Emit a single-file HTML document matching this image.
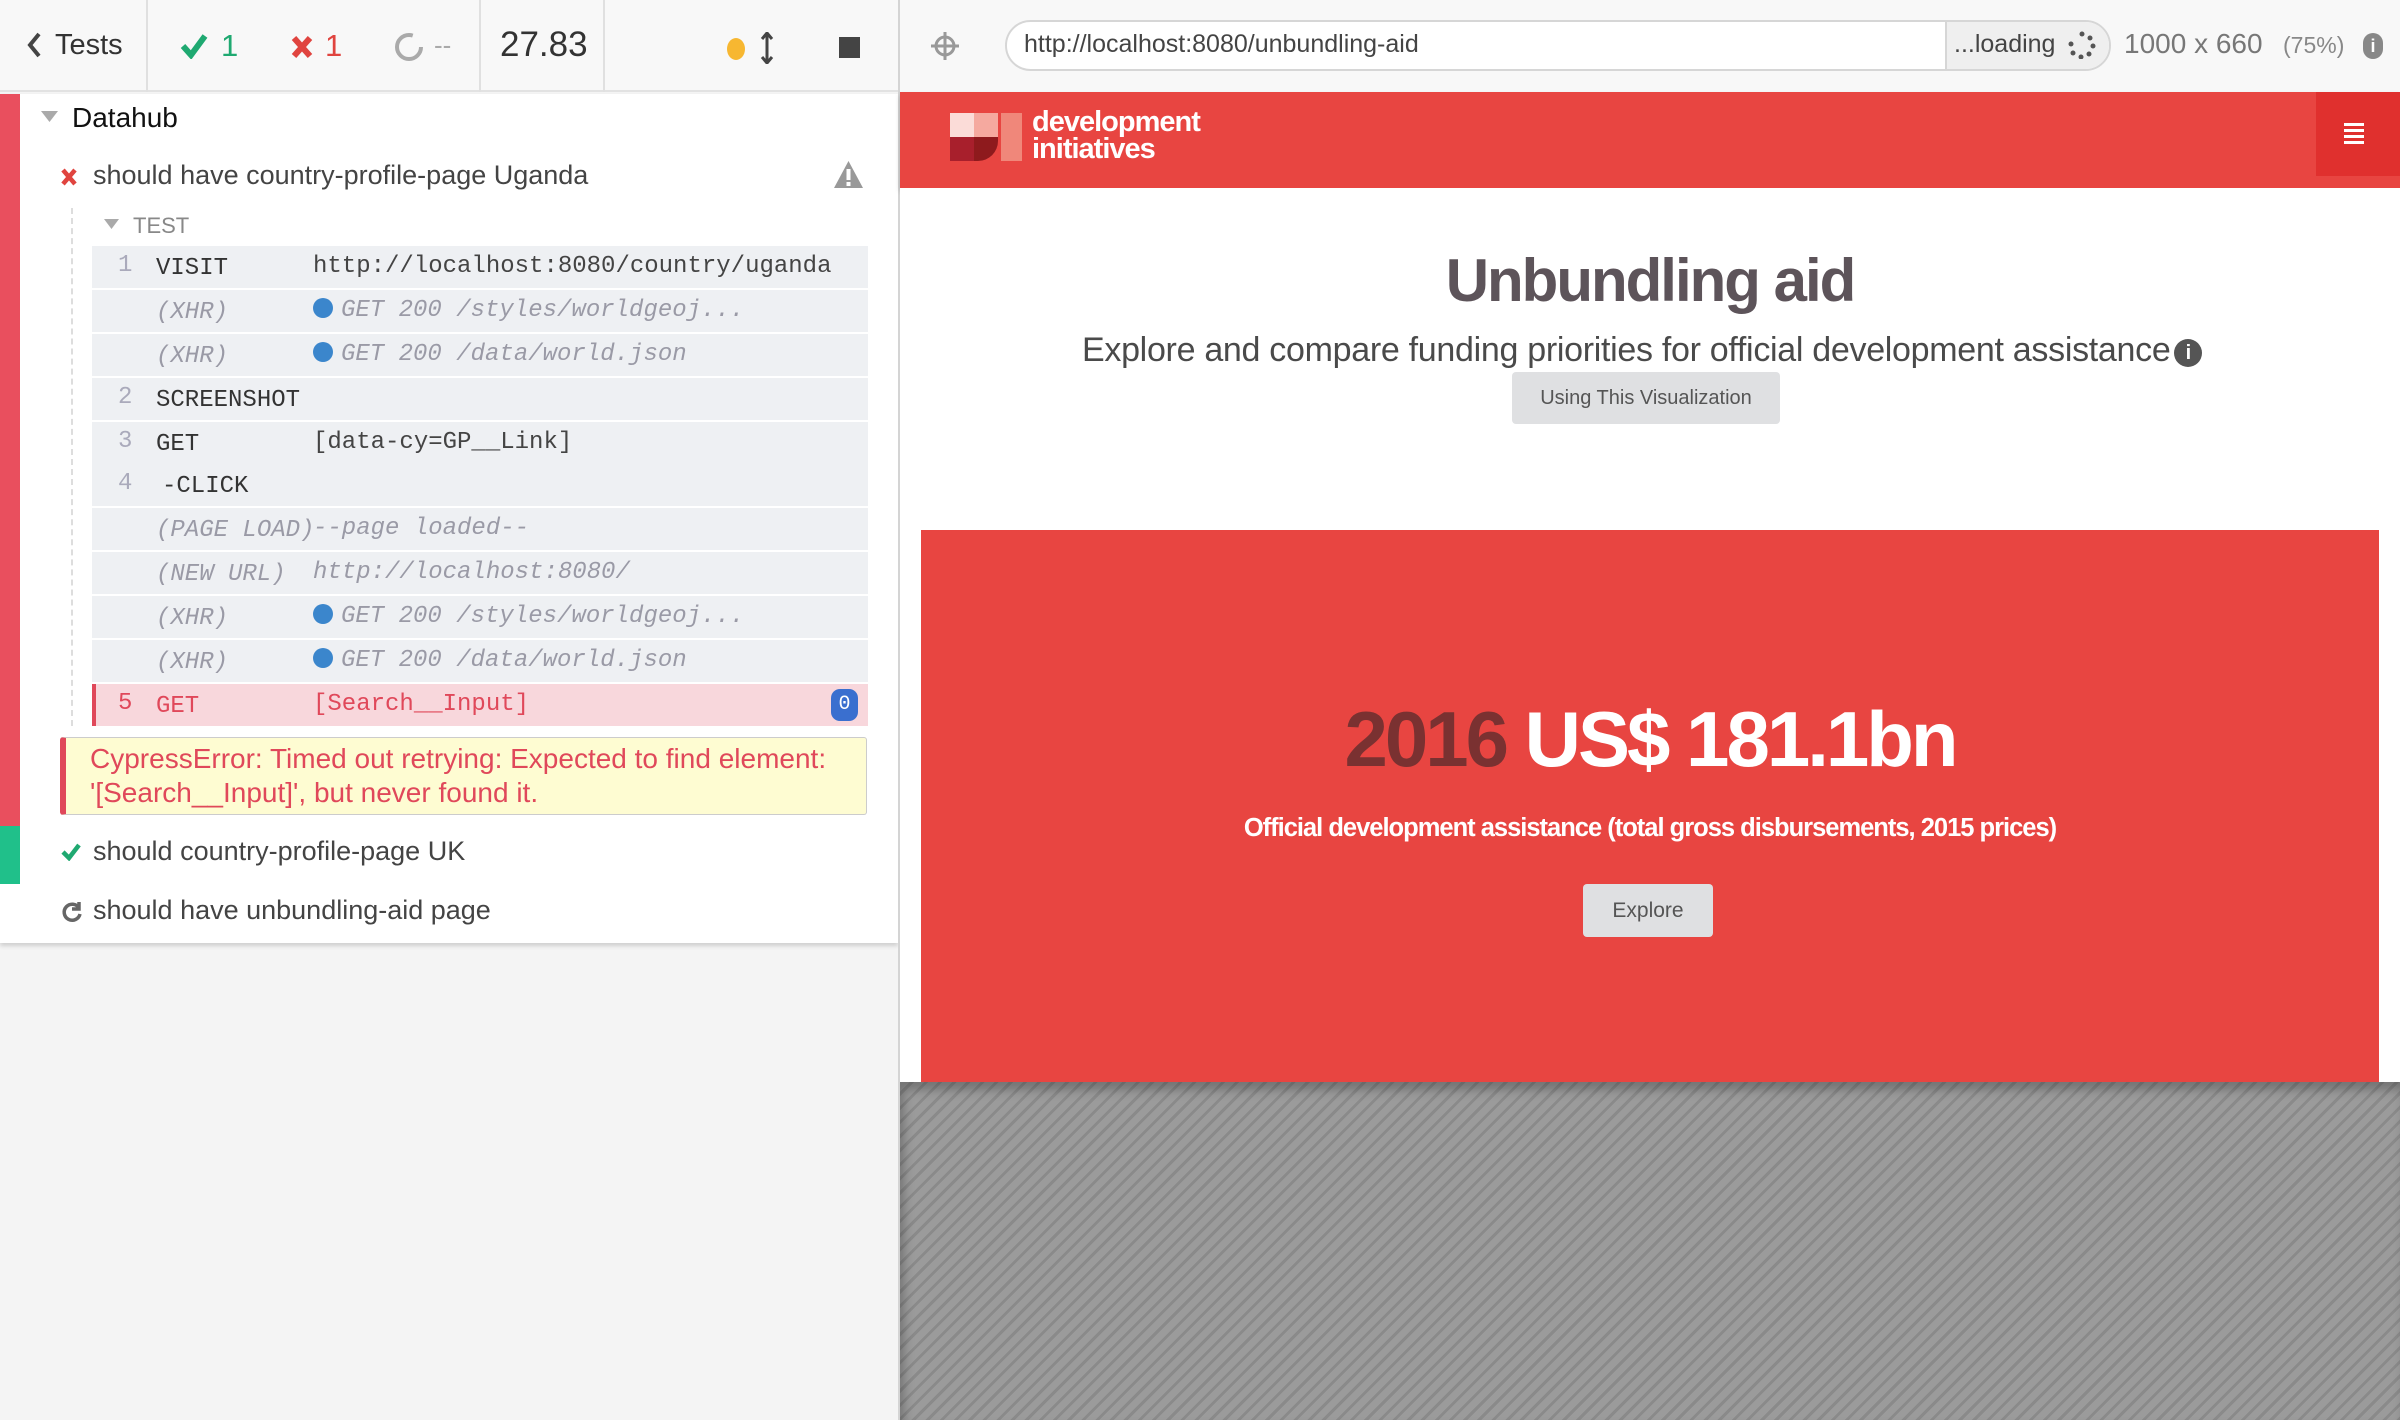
<!DOCTYPE html>
<html><head><meta charset="utf-8"><style>
*{margin:0;padding:0;box-sizing:border-box}
body{width:2400px;height:1420px;overflow:hidden;background:#f4f4f4;font-family:"Liberation Sans",sans-serif;position:relative}
.a{position:absolute;white-space:nowrap}
.mono{font-family:"Liberation Mono",monospace;font-size:24px}
.row{position:absolute;left:92px;width:776px;height:42px;background:#eef0f3}
.row .n{position:absolute;left:26px;top:6px;color:#aab;font-size:24px}
.row .c{position:absolute;left:64px;top:9px;color:#333}
.row .m{position:absolute;left:221px;top:7px;color:#444}
.row .i{font-style:italic;color:#9a9aa6}
.dot{display:inline-block;width:20px;height:20px;border-radius:50%;background:#3b86cc;vertical-align:-2px;margin-right:8px}
</style></head><body>
<!-- left header -->
<div class="a" style="left:0;top:0;width:898px;height:92px;background:#f8f8f8;border-bottom:2px solid #e2e2e2"></div>
<div class="a" style="left:146px;top:0;width:2px;height:92px;background:#e0e0e0"></div>
<div class="a" style="left:479px;top:0;width:2px;height:92px;background:#e0e0e0"></div>
<div class="a" style="left:603px;top:0;width:2px;height:92px;background:#e0e0e0"></div>
<svg class="a" style="left:26px;top:32px" width="16" height="26"><path d="M13 2 L4 13 L13 24" stroke="#444" stroke-width="4" fill="none"/></svg>
<div class="a" style="left:55px;top:29px;font-size:29px;color:#333">Tests</div>
<svg class="a" style="left:180px;top:33px" width="28" height="26"><path d="M3 13 L11 22 L25 3" stroke="#1fa971" stroke-width="6" fill="none"/></svg>
<div class="a" style="left:221px;top:28px;font-size:31px;color:#1fa971">1</div>
<svg class="a" style="left:291px;top:35px" width="22" height="24"><path d="M3 3 L19 21 M19 3 L3 21" stroke="#e0443f" stroke-width="6"/></svg>
<div class="a" style="left:325px;top:28px;font-size:31px;color:#e0443f">1</div>
<svg class="a" style="left:393px;top:31px" width="32" height="32"><circle cx="16" cy="16" r="12" stroke="#aaa" stroke-width="4" fill="none" stroke-dasharray="60 16"/></svg>
<div class="a" style="left:434px;top:30px;font-size:26px;color:#aaa">--</div>
<div class="a" style="left:500px;top:25px;font-size:35px;color:#333">27.83</div>
<div class="a" style="left:727px;top:38px;width:18px;height:22px;border-radius:50%;background:#f7b731"></div>
<svg class="a" style="left:760px;top:32px" width="14" height="32"><path d="M7 2 V30 M2 7 L7 1 L12 7 M2 25 L7 31 L12 25" stroke="#444" stroke-width="3" fill="none"/></svg>
<div class="a" style="left:839px;top:37px;width:21px;height:21px;background:#444"></div>
<!-- left panel -->
<div class="a" style="left:0;top:94px;width:898px;height:849px;background:#fff;box-shadow:0 3px 4px rgba(0,0,0,.15)"></div>
<div class="a" style="left:0;top:94px;width:20px;height:732px;background:#e94f5e"></div>
<div class="a" style="left:0;top:826px;width:20px;height:58px;background:#20c08a"></div>
<svg class="a" style="left:41px;top:111px" width="18" height="12"><path d="M0 0 H17 L8.5 11Z" fill="#aaa"/></svg>
<div class="a" style="left:72px;top:102px;font-size:28px;color:#111">Datahub</div>
<svg class="a" style="left:61px;top:168px" width="16" height="18"><path d="M2 2 L14 16 M14 2 L2 16" stroke="#e0443f" stroke-width="4.5"/></svg>
<div class="a" style="left:93px;top:160px;font-size:27px;color:#444">should have country-profile-page Uganda</div>
<svg class="a" style="left:833px;top:160px" width="31" height="29"><path d="M15.5 1 L30 28 H1Z" fill="#999"/><rect x="13.5" y="9" width="4" height="11" fill="#fff"/><rect x="13.5" y="22" width="4" height="4" fill="#fff"/></svg>
<div class="a" style="left:71px;top:208px;height:518px;border-left:2px dashed #ddd"></div>
<svg class="a" style="left:104px;top:219px" width="16" height="11"><path d="M0 0 H15 L7.5 10Z" fill="#aaa"/></svg>
<div class="a" style="left:133px;top:213px;font-size:22px;color:#888">TEST</div>

<div class="row mono" style="top:246px"><span class="n">1</span><span class="c">VISIT</span><span class="m">http://localhost:8080/country/uganda</span></div>
<div class="row mono" style="top:290px"><span class="c i">(XHR)</span><span class="m i"><span class="dot"></span>GET 200 /styles/worldgeoj...</span></div>
<div class="row mono" style="top:334px"><span class="c i">(XHR)</span><span class="m i"><span class="dot"></span>GET 200 /data/world.json</span></div>
<div class="row mono" style="top:378px"><span class="n">2</span><span class="c">SCREENSHOT</span></div>
<div class="row mono" style="top:422px;height:84px"><span class="n">3</span><span class="c">GET</span><span class="m">[data-cy=GP__Link]</span><span class="n" style="top:48px">4</span><span class="c" style="top:51px;left:70px">-CLICK</span></div>
<div class="row mono" style="top:508px"><span class="c i">(PAGE LOAD)</span><span class="m i">--page loaded--</span></div>
<div class="row mono" style="top:552px"><span class="c i">(NEW URL)</span><span class="m i">http://localhost:8080/</span></div>
<div class="row mono" style="top:596px"><span class="c i">(XHR)</span><span class="m i"><span class="dot"></span>GET 200 /styles/worldgeoj...</span></div>
<div class="row mono" style="top:640px"><span class="c i">(XHR)</span><span class="m i"><span class="dot"></span>GET 200 /data/world.json</span></div>
<div class="row mono" style="top:684px;background:#f8d7dc;border-left:4px solid #e0485a"><span class="n" style="color:#e0485a;left:22px">5</span><span class="c" style="color:#e0485a;left:60px">GET</span><span class="m" style="color:#e0485a;left:217px">[Search__Input]</span><span style="position:absolute;right:10px;top:5px;width:27px;height:32px;border-radius:9px;background:#3a6fcf;color:#fff;font-size:20px;text-align:center;line-height:32px">0</span></div>

<div class="a" style="left:60px;top:737px;width:807px;height:78px;background:#fefcd2;border:1px solid #ccc;border-left:6px solid #e0485a;border-radius:3px"></div>
<div class="a" style="left:90px;top:742px;font-size:28px;line-height:34px;color:#e0485a">CypressError: Timed out retrying: Expected to find element:<br>'[Search__Input]', but never found it.</div>
<svg class="a" style="left:61px;top:843px" width="20" height="18"><path d="M2 9 L8 15 L18 2" stroke="#1fa971" stroke-width="4.5" fill="none"/></svg>
<div class="a" style="left:93px;top:836px;font-size:27px;color:#444">should country-profile-page UK</div>
<svg class="a" style="left:61px;top:900px" width="22" height="24"><path d="M18 8 A8 8 0 1 0 19 14 M18 2 V9 H11" stroke="#666" stroke-width="3.5" fill="none"/></svg>
<div class="a" style="left:93px;top:895px;font-size:27px;color:#444">should have unbundling-aid page</div>

<!-- right -->
<div class="a" style="left:898px;top:0;width:2px;height:1420px;background:#d4d4d4"></div>
<div class="a" style="left:900px;top:0;width:1500px;height:92px;background:#f8f8f8"></div>
<svg class="a" style="left:930px;top:30px" width="30" height="32"><circle cx="15" cy="16" r="9" stroke="#999" stroke-width="3" fill="none"/><path d="M15 2 V30 M1 16 H29" stroke="#999" stroke-width="3"/></svg>
<div class="a" style="left:1005px;top:20px;width:1106px;height:51px;background:#fff;border:2px solid #d6d6d6;border-radius:26px;overflow:hidden">
<div style="position:absolute;left:938px;top:0;width:170px;height:51px;background:#efefef;border-left:2px solid #d6d6d6"></div></div>
<div class="a" style="left:1024px;top:30px;font-size:25px;color:#444">http://localhost:8080/unbundling-aid</div>
<div class="a" style="left:1954px;top:30px;font-size:25px;color:#444">...loading</div>
<svg class="a" style="left:2068px;top:31px" width="28" height="28"><g fill="#555"><circle cx="14" cy="3" r="2.5"/><circle cx="22" cy="7" r="2.5"/><circle cx="25" cy="15" r="2.5"/><circle cx="21" cy="23" r="2.5"/><circle cx="13" cy="26" r="2.5"/><circle cx="5" cy="22" r="2.5"/><circle cx="3" cy="13" r="2.5"/></g></svg>
<div class="a" style="left:2124px;top:28px;font-size:28px;color:#777">1000 x 660</div>
<div class="a" style="left:2283px;top:32px;font-size:23px;color:#888">(75%)</div>
<div class="a" style="left:2363px;top:33px;width:20px;height:26px;border-radius:10px;background:#888;color:#fff;font-size:18px;font-weight:bold;text-align:center;line-height:26px">i</div>

<div class="a" style="left:900px;top:92px;width:1500px;height:96px;background:#e84541;box-shadow:0 3px 5px rgba(0,0,0,.2)"></div>
<div class="a" style="left:2316px;top:92px;width:84px;height:84px;background:#e0302e"></div>
<div class="a" style="left:2344px;top:123px;width:20px;height:3px;background:#fff;box-shadow:0 6px 0 #fff,0 12px 0 #fff,0 18px 0 #fff"></div>
<div class="a" style="left:950px;top:113px;width:24px;height:24px;background:#fbdcd8"></div>
<div class="a" style="left:974px;top:113px;width:24px;height:24px;background:#f5a99f"></div>
<div class="a" style="left:950px;top:137px;width:24px;height:24px;background:#a81f2c"></div>
<div class="a" style="left:974px;top:137px;width:24px;height:24px;background:#8e1a1d;border-radius:0 0 20px 0"></div>
<div class="a" style="left:1001px;top:113px;width:21px;height:48px;background:#f0877a"></div>
<div class="a" style="left:1032px;top:109px;font-size:29px;line-height:27px;font-weight:bold;color:#fff;letter-spacing:-1px">development<br>initiatives</div>

<div class="a" style="left:900px;top:188px;width:1500px;height:894px;background:#fff"></div>
<div class="a" style="left:900px;top:246px;width:1500px;text-align:center;font-size:60px;font-weight:bold;color:#5d545a;letter-spacing:-2px">Unbundling aid</div>
<div class="a" style="left:1082px;top:331px;font-size:34px;color:#4a4a4a;letter-spacing:-0.3px">Explore and compare funding priorities for official development assistance<span style="display:inline-block;width:28px;height:28px;border-radius:50%;background:#555;color:#fff;font-size:20px;font-weight:bold;text-align:center;line-height:28px;vertical-align:2px;margin-left:4px;letter-spacing:0">i</span></div>
<div class="a" style="left:1512px;top:372px;width:268px;height:52px;background:#dfe0e2;border-radius:4px;text-align:center;line-height:52px;font-size:20px;color:#555">Using This Visualization</div>

<div class="a" style="left:921px;top:530px;width:1458px;height:552px;background:#e84541"></div>
<div class="a" style="left:900px;top:694px;width:1500px;text-align:center;font-size:78px;font-weight:bold;color:#fff;letter-spacing:-3px"><span style="color:#7a3131">2016</span> US$ 181.1bn</div>
<div class="a" style="left:900px;top:814px;width:1500px;text-align:center;font-size:25.5px;font-weight:bold;color:#fff;letter-spacing:-1px">Official development assistance (total gross disbursements, 2015 prices)</div>
<div class="a" style="left:1583px;top:884px;width:130px;height:53px;background:#dfe0e2;border-radius:4px;text-align:center;line-height:53px;font-size:21px;color:#555">Explore</div>

<div class="a" style="left:900px;top:1082px;width:1500px;height:338px;background:repeating-linear-gradient(135deg,#9b9b9b 0 7px,#8a8a8a 7px 10px);box-shadow:inset 4px 8px 10px rgba(0,0,0,.25)"></div>
</body></html>
